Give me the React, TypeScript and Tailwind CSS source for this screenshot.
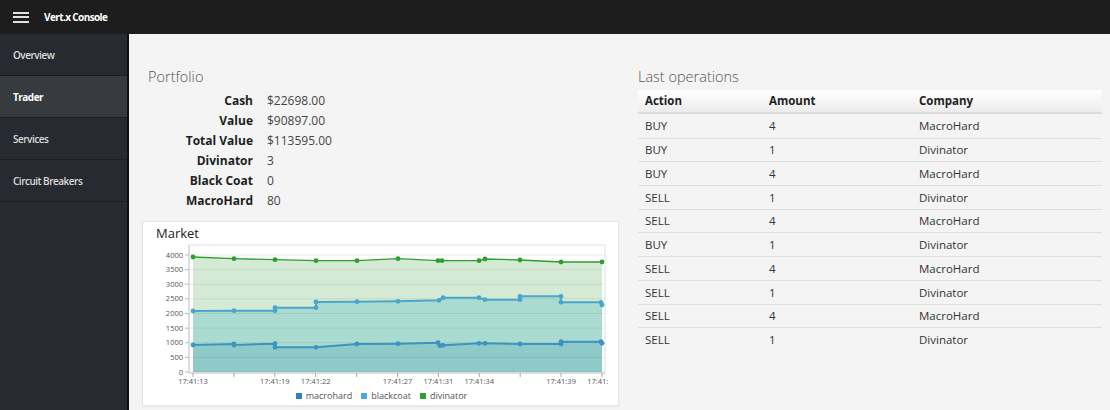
import React from 'react';

const font = { fontFamily: '"Open Sans", "Liberation Sans", sans-serif' };

const navItems = ['Overview', 'Trader', 'Services', 'Circuit Breakers'];

const portfolio: [string, string][] = [
  ['Cash', '$22698.00'],
  ['Value', '$90897.00'],
  ['Total Value', '$113595.00'],
  ['Divinator', '3'],
  ['Black Coat', '0'],
  ['MacroHard', '80'],
];

const operations: [string, string, string][] = [
  ['BUY', '4', 'MacroHard'],
  ['BUY', '1', 'Divinator'],
  ['BUY', '4', 'MacroHard'],
  ['SELL', '1', 'Divinator'],
  ['SELL', '4', 'MacroHard'],
  ['BUY', '1', 'Divinator'],
  ['SELL', '4', 'MacroHard'],
  ['SELL', '1', 'Divinator'],
  ['SELL', '4', 'MacroHard'],
  ['SELL', '1', 'Divinator'],
];

// points in page coordinates (the svg viewBox uses the same space)
const divinator: [number, number][] = [
  [192, 258], [233, 259.7], [274, 260.7], [315, 261.7], [356, 261.7], [397, 259.7],
  [437, 261.7], [441, 261.7], [478, 261.7], [484, 260], [519, 261], [560, 263], [601, 263],
];
const blackcoat: [number, number][] = [
  [192, 312], [233, 311.7], [274, 311.7], [274, 308.7], [315, 308.7], [315, 303],
  [356, 302.7], [397, 302.3], [438, 301.3], [442, 298.7], [478, 298.7], [484, 300.7],
  [519, 300.7], [519, 297.3], [560, 297.3], [560, 303.3], [600, 303.3], [601, 306],
];
const macrohard: [number, number][] = [
  [192, 346], [233, 345], [233, 346], [274, 344.7], [274, 348.3], [315, 348.3],
  [356, 345], [397, 344.7], [437, 343.7], [439, 346.7], [442, 346.3], [478, 344.3],
  [484, 344.3], [519, 345], [560, 345], [560, 342.7], [600, 342.7], [601, 344.3],
];

const BASE = 373;
const line = (pts: [number, number][]) => pts.map((p) => p.join(',')).join(' ');
const area = (pts: [number, number][]) =>
  `${pts[0][0]},${BASE} ${line(pts)} ${pts[pts.length - 1][0]},${BASE}`;

const yTicks = [0, 500, 1000, 1500, 2000, 2500, 3000, 3500, 4000];
const xTicks = Array.from({ length: 11 }, (_, i) => 192 + 40.9 * i);
const xLabels: Record<number, string> = {
  0: '17:41:13',
  2: '17:41:19',
  3: '17:41:22',
  5: '17:41:27',
  6: '17:41:31',
  7: '17:41:34',
  9: '17:41:39',
  10: '17:41:42',
};

function MarketChart() {
  const ty = (v: number) => BASE - (v * 117) / 4000;
  return (
    <svg width={477} height={146} viewBox="142 242 477 146" className="block">
      <defs>
        <clipPath id="plotclip">
          <rect x={142} y={242} width={465} height={146} />
        </clipPath>
      </defs>
      <rect x={188} y={246} width={416} height={128} fill="#fff" stroke="#e2e2e2" />
      <polygon points={area(divinator)} fill="#d4ead4" />
      <polygon points={area(blackcoat)} fill="#aadbd0" />
      <polygon points={area(macrohard)} fill="#8ecac8" />
      {yTicks.map((v) => (
        <g key={v}>
          <line x1={188} x2={604} y1={ty(v)} y2={ty(v)} stroke="rgba(0,0,0,0.07)" />
          <line x1={184} x2={188} y1={ty(v)} y2={ty(v)} stroke="#bbb" />
          <text x={182} y={ty(v) + 2.6} textAnchor="end" fontSize={7.5} fill="#555" style={font}>
            {v}
          </text>
        </g>
      ))}
      <line x1={188} x2={188} y1={246} y2={374} stroke="#ccc" />
      <line x1={188} x2={604} y1={374} y2={374} stroke="#ccc" />
      <polyline points={line(divinator)} fill="none" stroke="#2ca02c" strokeWidth={1.3} />
      <polyline points={line(blackcoat)} fill="none" stroke="#4aa6cb" strokeWidth={2} />
      <polyline points={line(macrohard)} fill="none" stroke="#3d93c1" strokeWidth={2} />
      {divinator.map(([x, y], i) => (
        <circle key={'d' + i} cx={x} cy={y} r={2.4} fill="#2ca02c" />
      ))}
      {blackcoat.map(([x, y], i) => (
        <circle key={'b' + i} cx={x} cy={y} r={2.4} fill="#4aa6cb" />
      ))}
      {macrohard.map(([x, y], i) => (
        <circle key={'m' + i} cx={x} cy={y} r={2.4} fill="#3d93c1" />
      ))}
      <g clipPath="url(#plotclip)">
        {xTicks.map((x, i) => (
          <g key={i}>
            <line x1={x} x2={x} y1={374} y2={378} stroke="#aaa" />
            {xLabels[i] && (
              <text x={x} y={385} textAnchor="middle" fontSize={7.5} fill="#555" style={font}>
                {xLabels[i]}
              </text>
            )}
          </g>
        ))}
      </g>
    </svg>
  );
}

function Legend() {
  const items: [string, string][] = [
    ['macrohard', 'bg-[#2f7fc6]'],
    ['blackcoat', 'bg-[#4ba8e0]'],
    ['divinator', 'bg-[#2ca02c]'],
  ];
  return (
    <div className="mt-[4px] flex justify-center gap-[9px] text-[9px] text-[#555] leading-none pl-[2px]">
      {items.map(([label, color]) => (
        <div key={label} className="flex items-center gap-[4px]">
          <span className={`w-[6px] h-[6px] ${color}`} />
          <span>{label}</span>
        </div>
      ))}
    </div>
  );
}

export default function App() {
  return (
    <div className="w-[1110px] h-[410px] flex flex-col overflow-hidden bg-[#f4f4f4]" style={font}>
      <header className="h-[34px] bg-[#1d1d1d] flex items-center shrink-0">
        <div className="w-[16px] ml-[13px] flex flex-col gap-[2.5px]">
          <span className="h-[2px] bg-[#e0e0e0]" />
          <span className="h-[2px] bg-[#e0e0e0]" />
          <span className="h-[2px] bg-[#e0e0e0]" />
        </div>
        <span className="ml-[15px] text-white text-[10px] font-bold tracking-[-0.06em]">Vert.x Console</span>
      </header>

      <div className="flex flex-1 min-h-0">
        <nav className="w-[129px] shrink-0 bg-[#272b31] border-r-2 border-[#0e0f10]">
          {navItems.map((item) => (
            <div
              key={item}
              className={`h-[42px] flex items-center pl-[13px] pt-[1px] border-b border-[#1b1e22] text-[10px] tracking-[-0.05em] ${
                item === 'Trader' ? 'bg-[#373b40] text-white font-bold' : 'text-[#dcdcdc] font-semibold'
              }`}
            >
              {item}
            </div>
          ))}
        </nav>

        <main className="flex-1 flex pl-[13px] pt-[33px] gap-[19px]">
          <section className="w-[477px]">
            <h2 className="pl-[6px] text-[14.5px] font-light text-[#555] leading-[20px]">Portfolio</h2>
            <div className="mt-[4px] pl-[6px]">
              {portfolio.map(([label, value]) => (
                <div key={label} className="flex h-[20px] items-center">
                  <span className="w-[119px] text-right pr-[14px] text-[12px] font-bold text-[#1e1e1e]">
                    {label}
                  </span>
                  <span className="text-[12px] text-[#444]">{value}</span>
                </div>
              ))}
            </div>
            <div className="mt-[10px] h-[185px] bg-white border border-[#e6e6e6] shadow-[0_1px_2px_rgba(0,0,0,0.06)]">
              <div className="h-[19px] pl-[13px] pt-[2px] text-[13px] text-[#222] leading-[19px]">Market</div>
              <MarketChart />
              <Legend />
            </div>
          </section>

          <section className="w-[464px]">
            <h2 className="text-[14.5px] font-light text-[#555] leading-[20px]">Last operations</h2>
            <div className="mt-[3px] text-[11.5px] text-[#333]">
              <div className="grid grid-cols-[131px_150px_1fr] h-[24px] items-center font-bold text-[#222] bg-gradient-to-b from-white to-[#ececec] border-b-2 border-[#dcdcdc]">
                <span className="pl-[7px]">Action</span>
                <span>Amount</span>
                <span>Company</span>
              </div>
              {operations.map(([action, amount, company], i) => (
                <div
                  key={i}
                  className={`grid grid-cols-[131px_150px_1fr] h-[23.7px] items-center ${
                    i > 0 ? 'border-t border-[#dedede]' : ''
                  }`}
                >
                  <span className="pl-[7px]">{action}</span>
                  <span>{amount}</span>
                  <span>{company}</span>
                </div>
              ))}
            </div>
          </section>
        </main>
      </div>
    </div>
  );
}
